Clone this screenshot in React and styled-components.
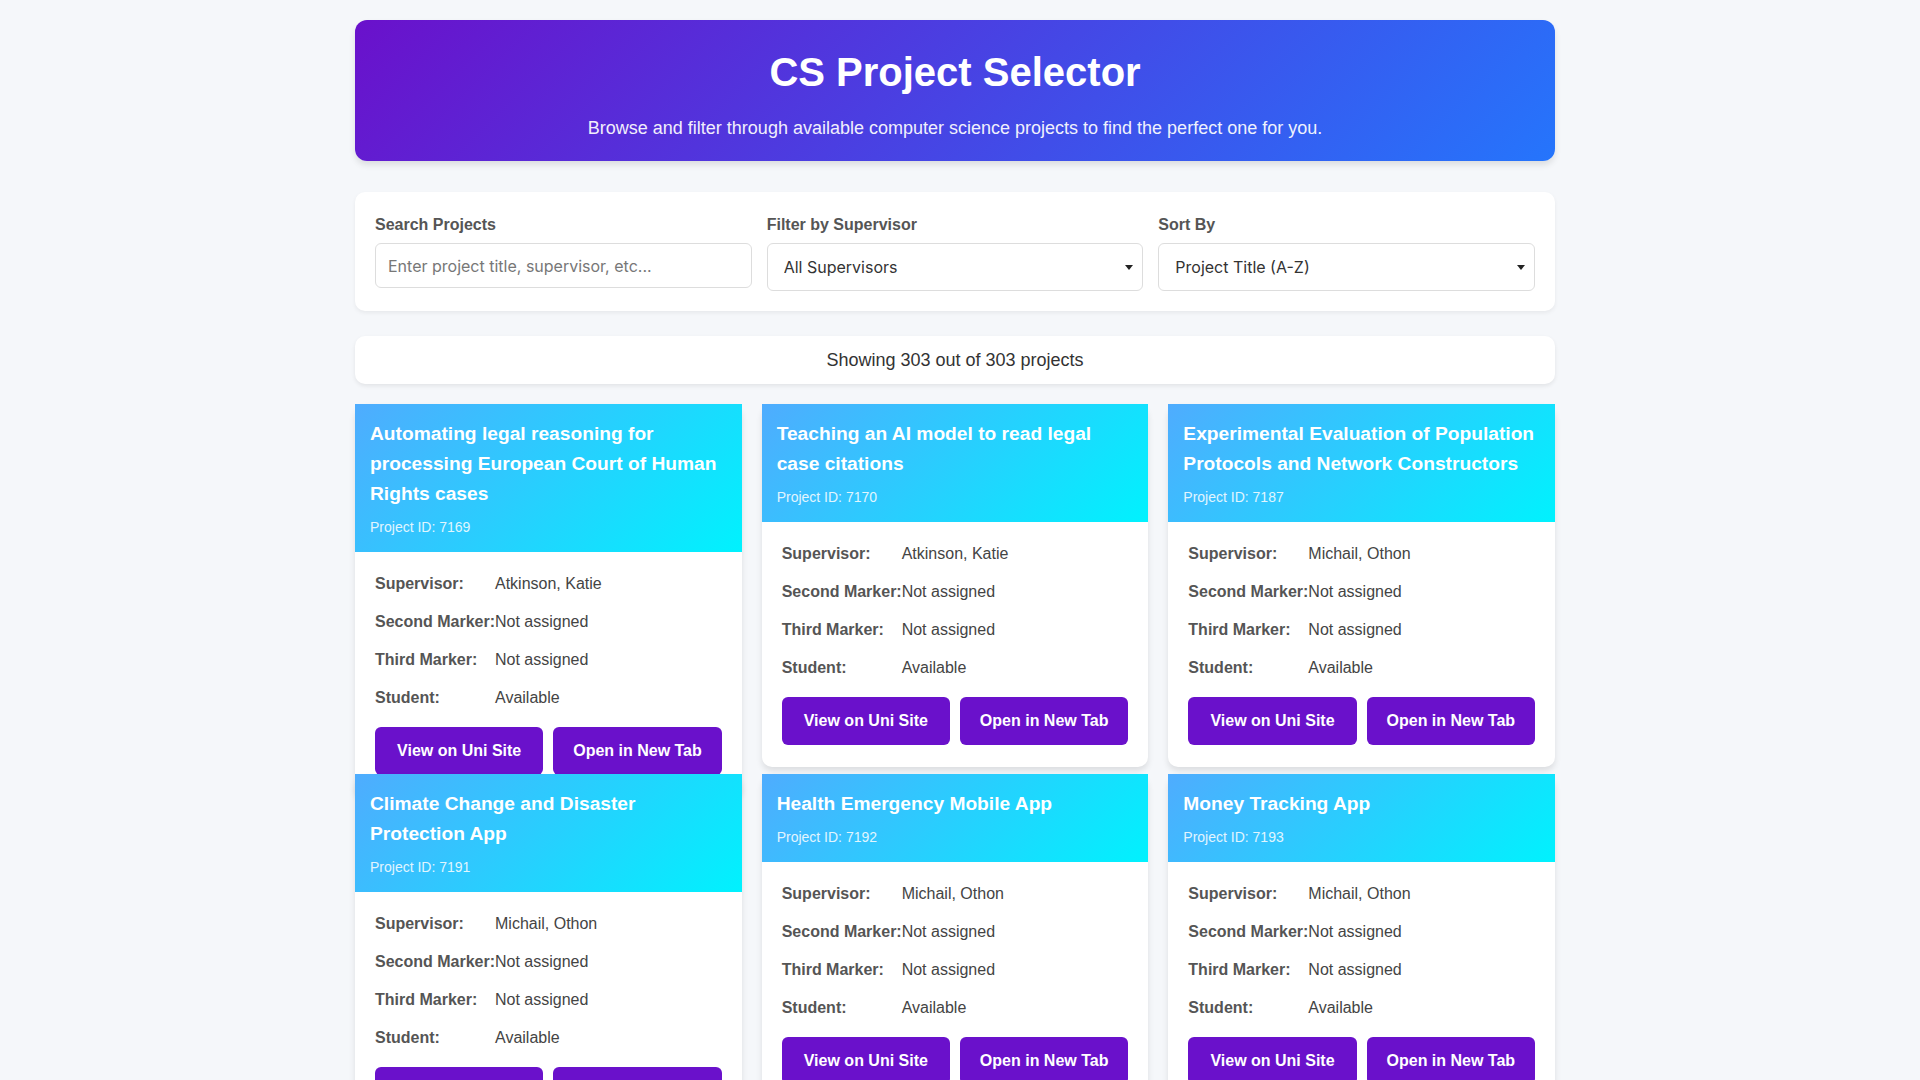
import React from "react";
import styled, { createGlobalStyle } from "styled-components";

const GlobalStyle = createGlobalStyle`
  * {
    box-sizing: border-box;
  }
  body {
    margin: 0;
    padding-right: 10px;
    background-color: #f5f7fa;
    font-family: "Liberation Sans", Arial, sans-serif;
    color: #333;
  }
`;

const ROW_HEIGHT = 370;
const TOTAL_PROJECTS = 303;

const projects = [
  {
    id: 7169,
    title: "Automating legal reasoning for processing European Court of Human Rights cases",
    supervisor: "Atkinson, Katie",
  },
  {
    id: 7170,
    title: "Teaching an AI model to read legal case citations",
    supervisor: "Atkinson, Katie",
  },
  {
    id: 7187,
    title: "Experimental Evaluation of Population Protocols and Network Constructors",
    supervisor: "Michail, Othon",
  },
  {
    id: 7191,
    title: "Climate Change and Disaster Protection App",
    supervisor: "Michail, Othon",
  },
  {
    id: 7192,
    title: "Health Emergency Mobile App",
    supervisor: "Michail, Othon",
  },
  {
    id: 7193,
    title: "Money Tracking App",
    supervisor: "Michail, Othon",
  },
];

const arrow =
  "url(\"data:image/svg+xml;utf8,<svg xmlns='http://www.w3.org/2000/svg' width='8' height='5' viewBox='0 0 8 5'><path d='M0 0h8L4 5z' fill='%23222'/></svg>\")";

const Container = styled.div`
  max-width: 1200px;
  margin: 0 auto;
  padding: 20px 0;
`;

const Header = styled.header`
  background: linear-gradient(135deg, #6a11cb 0%, #2575fc 100%);
  border-radius: 12px;
  box-shadow: 0 4px 6px rgba(0, 0, 0, 0.1);
  color: white;
  text-align: center;
  padding: 30px 20px 22px;
  margin-bottom: 31px;
`;

const Title = styled.h1`
  margin: 0 0 23px;
  font-size: 40px;
  font-weight: bold;
`;

const Subtitle = styled.p`
  margin: 0;
  font-size: 18px;
  opacity: 0.92;
`;

const FilterPanel = styled.div`
  background: white;
  border-radius: 10px;
  box-shadow: 0 2px 4px rgba(0, 0, 0, 0.06);
  padding: 20px;
  display: grid;
  grid-template-columns: repeat(3, 1fr);
  gap: 15px;
  margin-bottom: 25px;
`;

const FilterGroup = styled.div`
  display: flex;
  flex-direction: column;
`;

const Label = styled.label`
  font-size: 16px;
  font-weight: bold;
  line-height: 26px;
  color: #555;
  margin-bottom: 5px;
`;

const TextInput = styled.input`
  height: 45px;
  padding: 0 12px;
  border: 1px solid #ddd;
  border-radius: 6px;
  font-family: Inter, "Liberation Sans", sans-serif;
  font-size: 16px;
  color: #333;
  &::placeholder {
    color: #777;
  }
`;

const Select = styled.select`
  appearance: none;
  height: 48px;
  padding: 0 30px 0 16px;
  border: 1px solid #ddd;
  border-radius: 6px;
  background: white ${arrow} no-repeat right 9px center;
  font-family: Inter, "Liberation Sans", sans-serif;
  font-size: 16px;
  color: #333;
`;

const Count = styled.div`
  background: white;
  border-radius: 10px;
  box-shadow: 0 2px 4px rgba(0, 0, 0, 0.08);
  text-align: center;
  font-size: 18px;
  line-height: 24px;
  padding: 12px;
  color: #333;
  margin-bottom: 20px;
`;

const ProjectList = styled.div`
  position: relative;
`;

const Grid = styled.div`
  display: grid;
  grid-template-columns: repeat(3, 1fr);
  grid-auto-rows: ${ROW_HEIGHT - 10}px;
  column-gap: 20px;
  row-gap: 10px;
  align-items: start;
`;

const Card = styled.div`
  background: white;
  border-radius: 10px;
  box-shadow: 0 4px 6px rgba(0, 0, 0, 0.1);
`;

const CardHeader = styled.div`
  background: linear-gradient(135deg, #4facfe 0%, #00f2fe 100%);
  color: white;
  padding: 15px;
`;

const CardTitle = styled.h3`
  margin: 0 0 8px;
  font-size: 19.2px;
  line-height: 30px;
  font-weight: bold;
`;

const ProjectId = styled.div`
  font-size: 14px;
  line-height: 20px;
  opacity: 0.85;
`;

const CardBody = styled.div`
  padding: 20px 20px 22px;
`;

const InfoRow = styled.div`
  display: flex;
  font-size: 16px;
  line-height: 24px;
  margin-bottom: 14px;
`;

const InfoLabel = styled.span`
  width: 120px;
  flex-shrink: 0;
  white-space: nowrap;
  font-weight: bold;
  color: #555;
`;

const InfoValue = styled.span`
  color: #444;
`;

const Actions = styled.div`
  display: flex;
  gap: 10px;
  padding-top: 3px;
`;

const Button = styled.a`
  flex: 1;
  display: block;
  text-align: center;
  background: #6a11cb;
  color: white;
  font-weight: bold;
  font-size: 16px;
  line-height: 20px;
  padding: 14px 10px;
  border-radius: 6px;
  text-decoration: none;
  cursor: pointer;
`;

function ProjectCard({ project }) {
  return (
    <Card>
      <CardHeader>
        <CardTitle>{project.title}</CardTitle>
        <ProjectId>Project ID: {project.id}</ProjectId>
      </CardHeader>
      <CardBody>
        <InfoRow>
          <InfoLabel>Supervisor:</InfoLabel>
          <InfoValue>{project.supervisor}</InfoValue>
        </InfoRow>
        <InfoRow>
          <InfoLabel>Second Marker:</InfoLabel>
          <InfoValue>Not assigned</InfoValue>
        </InfoRow>
        <InfoRow>
          <InfoLabel>Third Marker:</InfoLabel>
          <InfoValue>Not assigned</InfoValue>
        </InfoRow>
        <InfoRow>
          <InfoLabel>Student:</InfoLabel>
          <InfoValue>Available</InfoValue>
        </InfoRow>
        <Actions>
          <Button>View on Uni Site</Button>
          <Button>Open in New Tab</Button>
        </Actions>
      </CardBody>
    </Card>
  );
}

export default function App() {
  const listHeight = Math.ceil(TOTAL_PROJECTS / 3) * ROW_HEIGHT;

  return (
    <>
      <GlobalStyle />
      <Container>
        <Header>
          <Title>CS Project Selector</Title>
          <Subtitle>
            Browse and filter through available computer science projects to find the perfect one for you.
          </Subtitle>
        </Header>

        <FilterPanel>
          <FilterGroup>
            <Label htmlFor="search">Search Projects</Label>
            <TextInput id="search" type="text" placeholder="Enter project title, supervisor, etc..." />
          </FilterGroup>
          <FilterGroup>
            <Label htmlFor="supervisor">Filter by Supervisor</Label>
            <Select id="supervisor" defaultValue="all">
              <option value="all">All Supervisors</option>
              <option value="atkinson">Atkinson, Katie</option>
              <option value="michail">Michail, Othon</option>
            </Select>
          </FilterGroup>
          <FilterGroup>
            <Label htmlFor="sort">Sort By</Label>
            <Select id="sort" defaultValue="title">
              <option value="title">Project Title (A-Z)</option>
              <option value="id">Project ID</option>
              <option value="supervisor">Supervisor</option>
            </Select>
          </FilterGroup>
        </FilterPanel>

        <Count>
          Showing {TOTAL_PROJECTS} out of {TOTAL_PROJECTS} projects
        </Count>

        <ProjectList style={{ height: listHeight }}>
          <Grid>
            {projects.map((p) => (
              <ProjectCard key={p.id} project={p} />
            ))}
          </Grid>
        </ProjectList>
      </Container>
    </>
  );
}
